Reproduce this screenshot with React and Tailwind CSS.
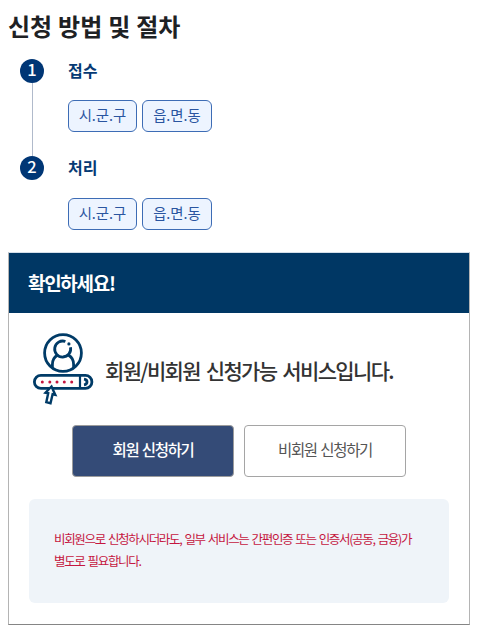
const steps = [
  { n: 1, title: '접수' },
  { n: 2, title: '처리' },
];

function Chip({ children, wide }) {
  return (
    <span
      className={`flex h-8 items-center justify-center rounded-md border border-[#3d6cb5] bg-[#edf4ff] pb-[3px] text-[14.4px] leading-5 text-[#2a55a0] ${wide ? 'w-[70px]' : 'w-[69px]'}`}
    >
      {children}
    </span>
  );
}

function Step({ n, title, last }) {
  return (
    <li className={`flex ${last ? 'h-[75px]' : 'h-[97px]'}`}>
      <div className="flex w-6 flex-col items-center">
        <span className="flex size-6 shrink-0 items-center justify-center rounded-full bg-[#003675] pb-[3px] text-[16.5px] font-medium leading-none text-white">
          {n}
        </span>
        {!last && <span className="w-px grow bg-[#b0bacb]" />}
      </div>
      <div className="ml-6">
        <h3 className="h-6 text-[16px] font-bold leading-[22px] text-[#063a74]">{title}</h3>
        <div className={`flex gap-[5px] ${last ? 'mt-[18px]' : 'mt-[17px]'}`}>
          <Chip>시.군.구</Chip>
          <Chip wide>읍.면.동</Chip>
        </div>
      </div>
    </li>
  );
}

function MemberIcon() {
  return (
    <svg className="h-[76px] w-[63px] shrink-0" viewBox="0 0 63 76" fill="none" stroke="#003b67" strokeWidth="2.8">
      <circle cx="31" cy="22" r="18.4" />
      <path d="M33.4 10.5A8 8 0 1 0 38.5 16.3" />
      <path d="M20.4 37v-3.5c0-4.5 2-7.5 5-9.2M41.6 37v-3.5c0-4.5-2-7.5-5-9.2" />
      <circle cx="36.9" cy="12.9" r="1.6" fill="#003b67" stroke="none" />
      <rect x="2.4" y="44.4" width="57.5" height="13" rx="6.5" />
      <path d="M48 44.4v13" strokeWidth="2.2" />
      <path d="M52 48.2c4 .6 4 5 0 5.6" strokeWidth="2.8" />
      <g fill="#c5163f" stroke="none">
        <circle cx="10.3" cy="51" r="1.5" />
        <circle cx="17.8" cy="51" r="1.5" />
        <circle cx="25" cy="51" r="1.5" />
        <circle cx="32.3" cy="51" r="1.5" />
        <circle cx="39.7" cy="51" r="1.5" />
      </g>
      <path d="M19.5 55.5l-6 6.2 2.7.5-1.9 9 4.2 1 2.1-8.9 2.7.6z" fill="white" strokeWidth="2.4" />
    </svg>
  );
}

export default function App() {
  return (
    <main className="h-[633px] w-[478px] overflow-hidden bg-white pl-2 font-['Noto_Sans_CJK_KR','Noto_Sans',sans-serif]">
      <h2 className="pt-2 text-[24px] font-bold leading-9 text-[#1e2124] [word-spacing:0.5px]">신청 방법 및 절차</h2>
      <ol className="ml-3 mt-[15px]">
        {steps.map((s, i) => (
          <Step key={s.n} n={s.n} title={s.title} last={i === steps.length - 1} />
        ))}
      </ol>
      <section className="mt-[21px] h-[373px] w-[462px] border border-[#b4b4b4] border-b-[#858585] border-t-[#d5dfea]">
        <h3 className="flex h-[60px] items-center bg-[#003764] pl-[19px] text-[19px] font-bold tracking-[-1.3px] text-white">
          확인하세요!
        </h3>
        <div className="flex h-[112px] items-start pl-[23px] pt-[18px]">
          <MemberIcon />
          <p className="ml-[10px] mt-6 text-[21px] font-medium leading-[30px] tracking-[-1.65px] text-[#333] [word-spacing:2.8px]">
            회원/비회원 신청가능 서비스입니다.
          </p>
        </div>
        <div className="flex gap-2.5 pl-[63px]">
          <button className="h-[52px] w-[162px] rounded border border-[#9c9c9c] bg-[#344b77] pb-0.5 text-[15.5px] font-medium tracking-[-1.3px] text-white [word-spacing:1.2px]">
            회원 신청하기
          </button>
          <button className="h-[52px] w-[162px] rounded border border-[#a5a5a5] bg-white pb-0.5 text-[15.5px] tracking-[-1.3px] text-[#555] [word-spacing:1.2px]">
            비회원 신청하기
          </button>
        </div>
        <div className="ml-5 mt-[22px] h-[104px] w-[420px] rounded-md bg-[#eff4f9] pl-[25px] pt-[29px] text-[12.5px] leading-[22px] tracking-[-1.32px] text-[#c5163f] [word-spacing:1.55px]">
          <p>비회원으로 신청하시더라도, 일부 서비스는 간편인증 또는 인증서(공동, 금융)가</p>
          <p>별도로 필요합니다.</p>
        </div>
      </section>
    </main>
  );
}
